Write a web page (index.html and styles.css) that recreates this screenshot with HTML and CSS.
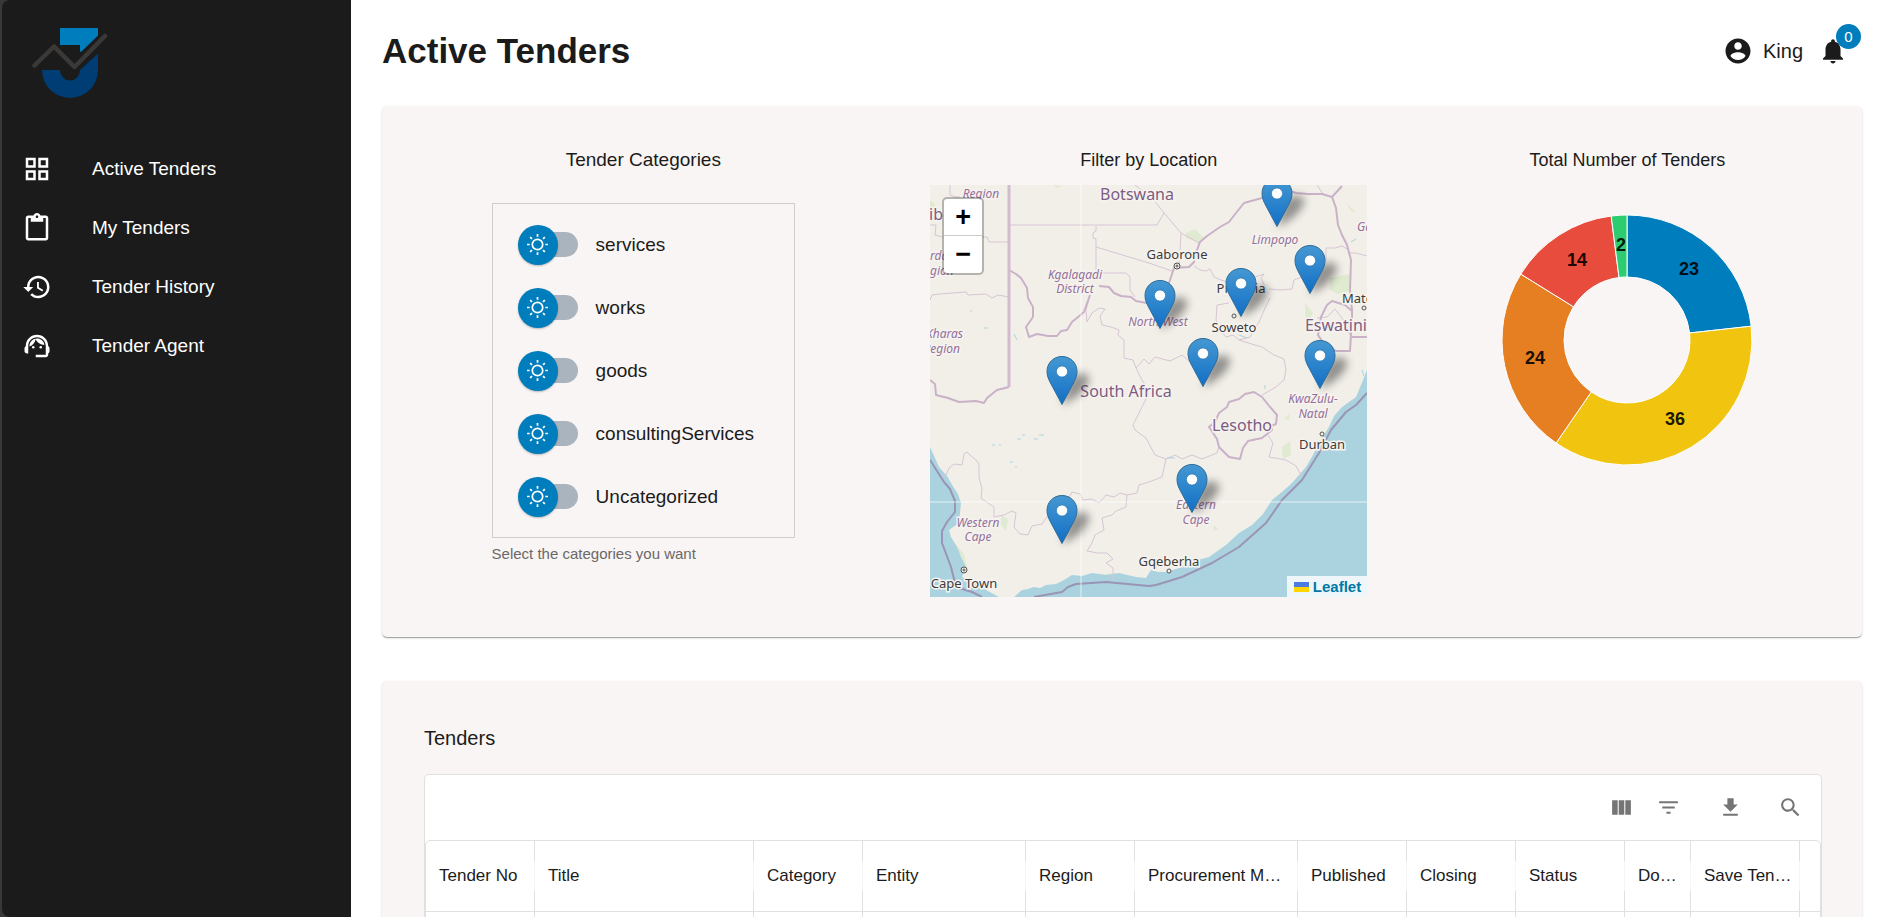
FILE: index.html
```
<!DOCTYPE html>
<html lang="en">
  <head>
    <meta charset="UTF-8" />
    <title>Active Tenders</title>
    <meta name="viewport" content="width=device-width, initial-scale=1" />
    <link rel="stylesheet" href="styles.css">
  </head>
  <body>
    <div class="layout">
      <!-- Sidebar -->
      <aside class="sidebar">
        <div class="sidebar-inner">
          <a href="#" class="logo" aria-label="Home">
            <svg width="76" height="72" viewBox="32 27 76 72">
              <path fill="#007dbc" d="M60 28h38v7.500L81 52l-1-.5V45H60z" />
              <path fill="#003d74" d="M42 70h18a10 10.500 0 0 0 20 0L98 53.500V70a28 28 0 0 1-56 0z" />
              <path fill="none" stroke="#3b3938" stroke-width="4.500" stroke-linecap="round" stroke-linejoin="round" d="M34.500 65.500L54 46.500 74.500 67 105 36" />
            </svg>
          </a>
          <nav class="nav">
            <a href="#" class="nav-link">
              <svg viewBox="0 0 24 24"><path d="M3 3v8h8V3H3zm6 6H5V5h4v4zm-6 4v8h8v-8H3zm6 6H5v-4h4v4zm4-16v8h8V3h-8zm6 6h-4V5h4v4zm-6 4v8h8v-8h-8zm6 6h-4v-4h4v4z" /></svg>
              <span>Active Tenders</span>
            </a>
            <a href="#" class="nav-link">
              <svg viewBox="0 0 24 24"><path d="M19 2h-4.180C14.400.84 13.300 0 12 0S9.600.84 9.180 2H5c-1.100 0-2 .9-2 2v16c0 1.100.9 2 2 2h14c1.100 0 2-.9 2-2V4c0-1.100-.9-2-2-2zm-7 0c.55 0 1 .45 1 1s-.45 1-1 1-1-.45-1-1 .45-1 1-1zm7 18H5V4h2v3h10V4h2v16z" /></svg>
              <span>My Tenders</span>
            </a>
            <a href="#" class="nav-link">
              <svg viewBox="0 0 24 24"><path d="M13 3c-4.970 0-9 4.030-9 9H1l3.890 3.890.07.14L9 12H6c0-3.870 3.130-7 7-7s7 3.130 7 7-3.130 7-7 7c-1.930 0-3.680-.79-4.940-2.060l-1.420 1.420C8.270 19.990 10.510 21 13 21c4.970 0 9-4.030 9-9s-4.030-9-9-9zm-1 5v5l4.280 2.540.72-1.210-3.500-2.080V8H12z" /></svg>
              <span>Tender History</span>
            </a>
            <a href="#" class="nav-link">
              <svg viewBox="0 0 24 24">
                <path d="M21 12.220C21 6.730 16.740 3 12 3c-4.690 0-9 3.650-9 9.280-.6.34-1 .98-1 1.720v2c0 1.100.9 2 2 2h1v-6.100c0-3.870 3.130-7 7-7s7 3.130 7 7V19h-8v2h8c1.100 0 2-.9 2-2v-1.220c.59-.31 1-.92 1-1.640v-2.300c0-.7-.41-1.310-1-1.620z" />
                <circle cx="9" cy="13" r="1" />
                <circle cx="15" cy="13" r="1" />
                <path d="M18 11.030C17.520 8.180 15.040 6 12.050 6c-3.030 0-6.290 2.510-6.030 6.450 2.470-1.010 4.330-3.210 4.860-5.890 1.310 2.630 4 4.440 7.120 4.470z" />
              </svg>
              <span>Tender Agent</span>
            </a>
          </nav>
        </div>
      </aside>

      <main class="main">
        <header class="topbar">
          <h1>Active Tenders</h1>
          <div class="user">
            <svg viewBox="0 0 24 24"><path d="M12 2C6.480 2 2 6.480 2 12s4.480 10 10 10 10-4.480 10-10S17.520 2 12 2zm0 3c1.660 0 3 1.340 3 3s-1.340 3-3 3-3-1.340-3-3 1.340-3 3-3zm0 14.200c-2.500 0-4.710-1.280-6-3.220.03-1.990 4-3.080 6-3.080 1.990 0 5.970 1.090 6 3.080-1.290 1.940-3.500 3.220-6 3.220z" /></svg>
            <span class="user-name">King</span>
            <button type="button" class="bell" aria-label="Notifications">
              <svg viewBox="0 0 24 24"><path d="M12 22c1.100 0 2-.9 2-2h-4c0 1.100.89 2 2 2zm6-6v-5c0-3.070-1.640-5.640-4.500-6.320V4c0-.83-.67-1.500-1.500-1.500s-1.500.67-1.500 1.500v.68C7.630 5.360 6 7.920 6 11v5l-2 2v1h16v-1l-2-2z" /></svg>
              <span class="badge">0</span>
            </button>
          </div>
        </header>

        <!-- Filters -->
        <section class="card filters">
          <div class="categories">
            <h2>Tender Categories</h2>
            <div class="category-box">
              <label class="category"><input type="checkbox" class="switch" /><span>services</span></label>
              <label class="category"><input type="checkbox" class="switch" /><span>works</span></label>
              <label class="category"><input type="checkbox" class="switch" /><span>goods</span></label>
              <label class="category"><input type="checkbox" class="switch" /><span>consultingServices</span></label>
              <label class="category"><input type="checkbox" class="switch" /><span>Uncategorized</span></label>
            </div>
            <p class="helper">Select the categories you want</p>
          </div>

          <div class="location">
            <h2>Filter by Location</h2>
            <div class="map">
              <svg class="map-canvas" viewBox="0 0 437 412" preserveAspectRatio="xMidYMid slice">
                <defs>
                  <linearGradient id="pinFill" x1="0" y1="0" x2="0" y2="1">
                    <stop offset="0" stop-color="#4598d2" />
                    <stop offset="1" stop-color="#126fc6" />
                  </linearGradient>
                  <filter id="soft" x="-50%" y="-50%" width="200%" height="200%">
                    <feGaussianBlur stdDeviation="4" />
                  </filter>
                  <!-- origin is the tip of the pin -->
                  <g id="pin">
                    <path d="M0 0L6-22C12-34 27-34 27-26C27-18 14-6 0 0z" fill="#000" opacity=".4" filter="url(#soft)" />
                    <path d="M0-.5L-11.500-22C-13.500-26-15-29-15-33.500C-15-42-8.500-48.500 0-48.500S15-42 15-33.500C15-29 13.500-26 11.500-22z" fill="url(#pinFill)" stroke="#2e6c97" />
                    <circle cy="-33.500" r="5.600" fill="#fff" stroke="#2e7ab5" stroke-width=".8" />
                  </g>
                </defs>
                <rect class="land" width="437" height="412" />

                <g class="green">
                  <path d="M256 48l9-4 9 9-6 4-12-4zM400 93l19-4 2 17-14 3-8-5zM0 15l5 4-2 9-3-2zM165 390l20-2 5 4-10 2zM123 0l8 1-4 2zM375 118l8 10-6 12-2-12zM284 340l4 4-5 2zM416 18l9 8-3 1zM354 235l5-6 1 5zM352 262l8-6 1 14-8 4zM71 330l7 4-2 12-5-6zM22 355l12 14 4 16-8-12z" />
                </g>
                <path class="lakes" d="M92 250h3M87 254h4M104 254h4M109 250h5M62 260h3M69 260h2M80 277h3M85 282h2M84 149l3 6M40 126h2M54 143h4M309 150l8 3M237 273l8 0M421 57l5-3M432 185l2 6M335 200v4" />

                <path class="water" d="M0 262L9 282L17 291L24 303L28 309L31 318L29 338L19 345L21 352L27 362L31 372L36 382L32 392L39 395L47 396L56 405L69 412H0z" />
                <path class="water" d="M84 412L92 405L98 404L104 402L110 403L116 400L126 399L134 395L142 390L152 391L162 388L176 390L189 388L206 392L216 393L221 385L228 387L236 387L249 383L259 380L268 375L279 372L296 360L309 348L322 340L333 329L342 315L352 307L362 298L376 282L383 270L389 258L399 242L404 231L412 222L426 212L431 200L437 185V412z" />

                <g class="border-thin">
                  <path d="M79 40H227L234 28M222 13L234 28L251 48L249 82M205 0L222 13M251 48L269 58M166 41V46L163 48V53L166 54V85M166 62L219 78L242 86M166 88H196L200 92V105L205 112M0 115L2 110L9 109L36 107L38 110L56 109L62 113L68 110L79 112M20 0V10L26 12L30 12M52 52H57L59 57H79M0 40L6 40L5 50L13 52" />
                  <path d="M9 293L16 290L19 283L24 279L32 280L34 269L37 267L41 271L46 275L49 279V293L52 303L51 313L58 318L64 322V332L74 330L82 326L86 328L84 342L90 349L98 350L102 341L112 339L116 333L134 322L142 307L150 309L153 315L162 314L169 318L176 310L184 312L190 308L197 310L207 308L209 300L219 297L232 292L236 274L225 270L216 253L205 245L203 240L219 208" />
                  <path d="M197 310L196 322L186 326L182 330L172 333L174 345L165 350L162 358L157 366L168 368L177 368L183 374L176 378L183 383V397" />
                  <path d="M160 110L156 125L157 137L162 128L169 123L175 124L170 131L172 140L181 142L189 145L188 150L194 155V173L203 175L206 183L214 174L219 179L225 172L240 176L252 170L261 178L264 183" />
                  <path d="M264 81L270 85L276 86L280 84L284 92L291 95L298 97M339 104L350 105L362 104L364 95L372 92L380 95M336 104L331 93L334 89L325 92M299 118L287 120L286 135L290 145L296 152L303 150L309 155L320 152L329 137L336 121L340 113M309 155L325 160L332 162L344 170L354 174L356 185L354 195L346 202L332 210M396 63H405L412 61L417 64M396 63V76M419 68L426 68L437 71M387 0L393 9" />
                  <path d="M289 262L287 268L272 274L262 270L252 274L245 270L236 274M338 250L343 258L339 272L356 275L366 281L372 292M206 183L212 195L219 206M387 133L397 132L405 124L415 137L420 150" />
                </g>
                <g class="border">
                  <path d="M79 85L86 89L91 93L97 103L98 113L103 122V132L96 142L99 152L107 149L118 151L127 151L131 146L137 145L142 137L154 127L160 110M169 101L179 102L184 108L191 111L201 112L206 116L222 119L234 110L239 98L244 83L259 82L264 77L267 65L270 57L277 51L290 42L299 37L306 28L314 18L332 13L340 6M360 6L366 8L378 9L392 9L402 12L412 1M402 12L406 23L408 40L412 50L417 60L421 75L420 105L422 125V132L420 166H406L394 159L388 150L391 132L397 120L402 116L415 120L422 126M421 152H437" />
                  <path d="M324 207L332 212L340 222L347 230L346 239L341 241L342 245L332 253L318 256L313 263L310 274L299 272L293 266L289 262L287 254L279 242L285 237L289 228L297 222L299 217L309 214L315 209z" />
                  <path d="M79 202L67 205L57 213L54 218L46 216L29 217L18 213L6 210L5 199L0 195" />
                </g>
                <path class="border-wide" d="M79 0V202" />
                <path class="maritime" d="M0 275L14 297L20 304L25 316V327L17 337L12 346V358L21 382L26 402L42 407L52 412M104 412L132 407L138 402L146 399L176 397L219 401L226 400L252 392L282 378L309 362L336 338L352 315L372 295L389 268L401 245L416 227L426 220L437 208" />
                <path class="seam" d="M151 0V412M0 317H437" />

                <g class="country">
                  <text x="207" y="15" text-anchor="middle">Botswana</text>
                  <text x="13" y="35" text-anchor="end">Namib</text>
                  <text x="196" y="212" text-anchor="middle">South Africa</text>
                  <text x="312" y="246" text-anchor="middle">Lesotho</text>
                  <text x="406" y="146" text-anchor="middle">Eswatini</text>
                </g>
                <g class="region">
                  <text x="51" y="13" text-anchor="middle">Region</text>
                  <text x="0" y="75">rdap</text>
                  <text x="0" y="90">gion</text>
                  <text x="145" y="94" text-anchor="middle">Kgalagadi</text>
                  <text x="145" y="108" text-anchor="middle">District</text>
                  <text x="33" y="153" text-anchor="end">Kharas</text>
                  <text x="30" y="168" text-anchor="end">Region</text>
                  <text x="345" y="59" text-anchor="middle">Limpopo</text>
                  <text x="228" y="141" text-anchor="middle">North West</text>
                  <text x="427" y="46">Gaza</text>
                  <text x="383" y="218" text-anchor="middle">KwaZulu-</text>
                  <text x="383" y="233" text-anchor="middle">Natal</text>
                  <text x="266" y="324" text-anchor="middle">Eastern</text>
                  <text x="266" y="339" text-anchor="middle">Cape</text>
                  <text x="48" y="342" text-anchor="middle">Western</text>
                  <text x="48" y="356" text-anchor="middle">Cape</text>
                </g>
                <g class="city">
                  <text x="247" y="74" text-anchor="middle">Gaborone</text>
                  <text x="311" y="108" text-anchor="middle">Pretoria</text>
                  <text x="304" y="147" text-anchor="middle">Soweto</text>
                  <text x="412" y="118">Matola</text>
                  <text x="392" y="264" text-anchor="middle">Durban</text>
                  <text x="239" y="381" text-anchor="middle">Gqeberha</text>
                  <text x="34" y="403" text-anchor="middle">Cape Town</text>
                </g>
                <g class="town">
                  <circle cx="247" cy="81" r="3" /><circle cx="247" cy="81" r="1" />
                  <circle cx="34" cy="385" r="3" /><circle cx="34" cy="385" r="1" />
                  <circle cx="304" cy="131" r="2" />
                  <circle cx="434" cy="123" r="2" />
                  <circle cx="392" cy="249" r="2" />
                  <circle cx="239" cy="386" r="2" />
                </g>

                <use href="#pin" x="347" y="42" />
                <use href="#pin" x="380" y="109" />
                <use href="#pin" x="311" y="132" />
                <use href="#pin" x="230" y="144" />
                <use href="#pin" x="273" y="202" />
                <use href="#pin" x="390" y="204" />
                <use href="#pin" x="132" y="220" />
                <use href="#pin" x="262" y="328" />
                <use href="#pin" x="132" y="359" />
              </svg>
              <div class="zoom">
                <button type="button" aria-label="Zoom in">+</button>
                <button type="button" aria-label="Zoom out">−</button>
              </div>
              <a href="#" class="attribution">
                <svg width="15" height="10" viewBox="0 0 15 10"><path fill="#4c7be1" d="M0 0h15v5H0z" /><path fill="#ffd500" d="M0 5h15v5H0z" /></svg>
                Leaflet
              </a>
            </div>
          </div>

          <div class="totals">
            <h2>Total Number of Tenders</h2>
            <svg class="donut" viewBox="0 0 250 250">
              <path fill="#007dbc" d="M125 0A125 125 0 0 1 249.200 111.200L187.600 118A63 63 0 0 0 125 62z" />
              <path fill="#f1c40f" d="M249.200 111.200A125 125 0 0 1 54.100 228L89.300 176.900A63 63 0 0 0 187.600 118z" />
              <path fill="#e67e22" d="M54.100 228A125 125 0 0 1 18.800 59.100L71.500 91.800A63 63 0 0 0 89.300 176.900z" />
              <path fill="#e74c3c" d="M18.800 59.100A125 125 0 0 1 109.200 1L117 62.500A63 63 0 0 0 71.500 91.800z" />
              <path fill="#2ecc71" d="M109.200 1A125 125 0 0 1 125 0V62A63 63 0 0 0 117 62.500z" />
              <text x="187" y="60">23</text>
              <text x="173" y="210">36</text>
              <text x="33" y="149">24</text>
              <text x="75" y="51">14</text>
              <text x="119" y="36">2</text>
            </svg>
          </div>
        </section>

        <!-- Tenders table -->
        <section class="card tenders">
          <h2>Tenders</h2>
          <div class="grid">
            <div class="toolbar">
              <button type="button" aria-label="Columns">
                <svg viewBox="0 0 24 24"><path d="M14.670 5v14H9.330V5h5.340zm1 14H21V5h-5.330v14zm-7.340 0V5H3v14h5.330z" /></svg>
              </button>
              <button type="button" aria-label="Filters">
                <svg viewBox="0 0 24 24"><path d="M10 18h4v-2h-4v2zM3 6v2h18V6H3zm3 7h12v-2H6v2z" /></svg>
              </button>
              <button type="button" class="wide" aria-label="Export">
                <svg viewBox="0 0 24 24"><path d="M19 9h-4V3H9v6H5l7 7 7-7zM5 18v2h14v-2H5z" /></svg>
              </button>
              <button type="button" class="wide" aria-label="Search">
                <svg viewBox="0 0 24 24"><path d="M15.500 14h-.79l-.28-.27C15.410 12.590 16 11.110 16 9.500 16 5.910 13.090 3 9.500 3S3 5.910 3 9.500 5.910 16 9.500 16c1.610 0 3.090-.59 4.230-1.570l.27.28v.79l5 4.990L20.490 19l-4.990-5zm-6 0C7.010 14 5 11.990 5 9.500S7.010 5 9.500 5 14 7.010 14 9.500 11.990 14 9.500 14z" /></svg>
              </button>
            </div>
            <table>
              <colgroup>
                <col class="col-md" />
                <col class="col-xl" />
                <col class="col-md" />
                <col class="col-lg" />
                <col class="col-md" />
                <col class="col-lg" />
                <col class="col-md" />
                <col class="col-md" />
                <col class="col-md" />
                <col class="col-sm" />
                <col class="col-md" />
                <col />
              </colgroup>
              <thead>
                <tr>
                  <th>Tender No</th>
                  <th>Title</th>
                  <th>Category</th>
                  <th>Entity</th>
                  <th>Region</th>
                  <th>Procurement Method</th>
                  <th>Published</th>
                  <th>Closing</th>
                  <th>Status</th>
                  <th>Documents</th>
                  <th>Save Tender</th>
                  <th></th>
                </tr>
              </thead>
              <tbody>
                <tr>
                  <td></td><td></td><td></td><td></td><td></td><td></td>
                  <td></td><td></td><td></td><td></td><td></td><td></td>
                </tr>
              </tbody>
            </table>
          </div>
        </section>
      </main>
    </div>
  </body>
</html>
```

FILE: styles.css
```
* {
  box-sizing: border-box;
}
body {
  font-family: "Liberation Sans", Arial, sans-serif;
  margin: 0;
  color: #1b1b1b;
  background: #fff;
}
h1,
h2,
p {
  margin: 0;
}
button {
  padding: 0;
  border: none;
  background: none;
  color: inherit;
  font-family: inherit;
  cursor: pointer;
}
.layout {
  display: flex;
  height: 100vh;
}

/* Sidebar */
.sidebar {
  flex: 0 0 351px;
  padding-left: 2px;
  background: #383838;
}
.sidebar-inner {
  height: 100%;
  padding: 27px 20px;
  background: #1b1b1b;
  border-radius: 8px 0 0 8px;
}
.logo {
  display: block;
  height: 112px;
  padding-left: 10px;
}
.nav {
  display: flex;
  flex-direction: column;
}
.nav-link {
  display: flex;
  align-items: center;
  gap: 40px;
  height: 59px;
  color: #fff;
  font-size: 19px;
  text-decoration: none;
}
.nav-link svg {
  width: 30px;
  height: 30px;
  fill: #fff;
}

/* Main */
.main {
  flex: 1;
  min-width: 0;
  padding: 0 29px 40px 31px;
  overflow-y: auto;
  scrollbar-width: none;
}
.topbar {
  display: flex;
  align-items: center;
  justify-content: space-between;
  height: 102px;
  padding-right: 14px;
}
h1 {
  font-size: 35px;
  line-height: 40px;
}
.user {
  display: flex;
  align-items: center;
}
.user svg {
  display: block;
  width: 30px;
  height: 30px;
  fill: #1b1b1b;
}
.user-name {
  margin: 0 15px 0 10px;
  font-size: 20px;
}
.bell {
  position: relative;
}
.badge {
  position: absolute;
  top: -12px;
  right: -13px;
  width: 25px;
  height: 25px;
  border-radius: 50%;
  background: #007dbc;
  color: #fff;
  font-size: 15px;
  line-height: 25px;
  text-align: center;
}
.card {
  background: #f9f5f4;
  border-radius: 5px;
  box-shadow: 0 2px 1px -1px rgba(0, 0, 0, 0.2), 0 1px 1px rgba(0, 0, 0, 0.14),
    0 1px 3px rgba(0, 0, 0, 0.12);
}

/* Filters */
.filters {
  display: flex;
  align-items: flex-start;
  justify-content: space-around;
  margin-top: 4px;
  padding: 40px 42px;
}
.filters h2 {
  font-size: 18px;
  font-weight: 400;
  line-height: 28px;
  text-align: center;
}
.filters .categories h2 {
  font-size: 19px;
}
.category-box {
  margin-top: 29px;
  padding: 9px 40px 9px 25px;
  border: 1px solid #d1cdcc;
}
.category {
  display: flex;
  align-items: center;
  gap: 18px;
  height: 63px;
  font-size: 19px;
}
.switch {
  display: flex;
  align-items: center;
  width: 60px;
  height: 40px;
  margin: 0;
  appearance: none;
  cursor: pointer;
}
.switch::before {
  content: "";
  flex: none;
  width: 40px;
  height: 40px;
  border-radius: 50%;
  background: #007dbc
    url('data:image/svg+xml,<svg xmlns="http://www.w3.org/2000/svg" viewBox="0 0 20 20"><path fill="white" d="M9.305 1.667V3.75h1.389V1.667h-1.39zm-4.707 1.95l-.982.982L5.09 6.072l.982-.982-1.473-1.473zm10.802 0L13.927 5.09l.982.982 1.473-1.473-.982-.982zM10 5.139a4.872 4.872 0 00-4.862 4.86A4.872 4.872 0 0010 14.862 4.872 4.872 0 0014.86 10 4.872 4.872 0 0010 5.139zm0 1.389A3.462 3.462 0 0113.471 10a3.462 3.462 0 01-3.473 3.472A3.462 3.462 0 016.527 10 3.462 3.462 0 0110 6.528zM1.665 9.305v1.39h2.083v-1.39H1.666zm14.583 0v1.39h2.084v-1.39h-2.084zM5.09 13.928L3.616 15.4l.982.982 1.473-1.473-.982-.982zm9.82 0l-.982.982 1.473 1.473.982-.982-1.473-1.473zM9.305 16.25v2.083h1.389V16.25h-1.39z"/></svg>')
    center / 25px no-repeat;
  box-shadow: 0 1px 2px rgba(0, 0, 0, 0.25);
  z-index: 1;
}
.switch::after {
  content: "";
  flex: none;
  width: 40px;
  height: 25px;
  margin-left: -20px;
  border-radius: 13px;
  background: #aab4be;
}
.helper {
  margin-top: 6px;
  color: #6b6868;
  font-size: 15px;
  line-height: 20px;
}

/* Map */
.map {
  position: relative;
  width: 437px;
  height: 412px;
  margin-top: 11px;
  overflow: hidden;
}
.map-canvas {
  display: block;
  width: 100%;
  height: 100%;
  font-family: "Noto Sans", "Open Sans", sans-serif;
}
.land {
  fill: #f2efe9;
}
.water {
  fill: #aad3df;
}
.green {
  fill: #dfead0;
}
.lakes {
  fill: none;
  stroke: #aad3df;
}
.border,
.border-thin,
.border-wide,
.maritime {
  fill: none;
  stroke: #c9b2c8;
  stroke-linejoin: round;
}
.border {
  stroke-width: 2;
}
.border-thin {
  stroke: #d6c5d5;
  stroke-width: 1;
}
.border-wide {
  stroke: #d0bcce;
  stroke-width: 3;
}
.maritime {
  stroke: #9a94b5;
  stroke-width: 2;
}
.seam {
  stroke: #fff;
  opacity: 0.7;
}
.map-canvas text {
  stroke: #f6f3ef;
  stroke-width: 3;
  paint-order: stroke;
}
.country text {
  fill: #7d5c82;
  font-size: 16px;
}
.region text {
  fill: #93709a;
  font-size: 12px;
  font-style: italic;
}
.city text {
  fill: #3c3c3c;
  font-size: 13px;
}
.town {
  fill: #f2efe9;
  stroke: #555;
}
.zoom {
  position: absolute;
  top: 12px;
  left: 12px;
  border: 2px solid rgba(0, 0, 0, 0.25);
  border-radius: 5px;
  background: #fff;
  background-clip: padding-box;
}
.zoom button {
  display: block;
  width: 38px;
  height: 37px;
  color: #000;
  font-size: 27px;
  font-weight: 700;
  line-height: 37px;
}
.zoom button:first-child {
  border-bottom: 1px solid #ccc;
}
.attribution {
  position: absolute;
  right: 0;
  bottom: 0;
  display: flex;
  align-items: center;
  gap: 4px;
  padding: 0 6px 0 7px;
  background: rgba(255, 255, 255, 0.8);
  color: #0078a8;
  font-size: 15px;
  font-weight: 700;
  line-height: 21px;
  text-decoration: none;
}

/* Donut chart */
.totals {
  display: flex;
  flex-direction: column;
  align-items: center;
  width: 250px;
}
.donut {
  width: 100%;
  margin-top: 41px;
  overflow: visible;
}
.donut path {
  stroke: #fff;
}
.donut text {
  fill: rgba(0, 0, 0, 0.9);
  font-size: 18px;
  font-weight: 700;
  text-anchor: middle;
}

/* Table */
.tenders {
  margin-top: 44px;
  padding: 42px 40px 40px 42px;
}
.tenders h2 {
  font-size: 20px;
  font-weight: 400;
  line-height: 30px;
}
.grid {
  margin-top: 21px;
  border: 1px solid #e0e0e0;
  border-radius: 5px;
  background: #fff;
}
.toolbar {
  display: flex;
  justify-content: flex-end;
  height: 65px;
  padding-right: 1px;
}
.toolbar button {
  display: flex;
  align-items: center;
  justify-content: center;
  width: 47px;
}
.toolbar .wide {
  width: 60px;
}
.toolbar button:nth-child(2) {
  margin-right: 8px;
}
.toolbar svg {
  width: 25px;
  height: 25px;
  fill: #757575;
}
table {
  width: 100%;
  table-layout: fixed;
  border-collapse: separate;
  border-spacing: 0;
  border: 1px solid #e0e0e0;
  border-radius: 5px;
}
.col-sm {
  width: 66px;
}
.col-md {
  width: 109px;
}
.col-lg {
  width: 163px;
}
.col-xl {
  width: 219px;
}
th {
  height: 71px;
  padding: 0 8px 0 13px;
  border-bottom: 1px solid #e0e0e0;
  background: linear-gradient(#e0e0e0 20px, #f6f6f6 20px, #f6f6f6 50px, #e0e0e0 50px)
    right / 1px 100% no-repeat;
  font-size: 17px;
  font-weight: 400;
  text-align: left;
  overflow: hidden;
  text-overflow: ellipsis;
  white-space: nowrap;
}
td {
  height: 65px;
  border-right: 1px solid #e0e0e0;
  border-bottom: 1px solid #e0e0e0;
}
th:last-child {
  background: none;
}
td:last-child {
  border: none;
}
```
